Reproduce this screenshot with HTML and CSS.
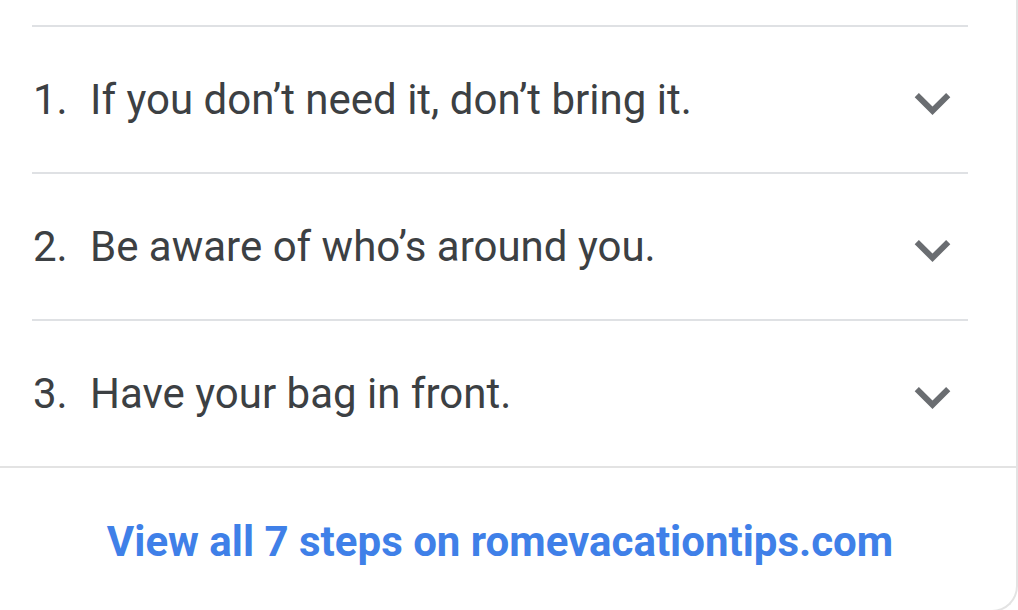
FILE: index.html
```html
<!DOCTYPE html>
<html>
<head>
<meta charset="utf-8">
<link rel="stylesheet" href="styles.css">
</head>
<body>
<div class="card">
  <div class="steps">
    <div class="step">
      <span class="num">1.</span>
      <span class="text">If you don’t need it, don’t bring it.</span>
      <svg class="chev" viewBox="6 8.59 12 7.41"><path d="M16.59 8.59L12 13.17 7.41 8.59 6 10l6 6 6-6z"/></svg>
    </div>
    <div class="step">
      <span class="num">2.</span>
      <span class="text">Be aware of who’s around you.</span>
      <svg class="chev" viewBox="6 8.59 12 7.41"><path d="M16.59 8.59L12 13.17 7.41 8.59 6 10l6 6 6-6z"/></svg>
    </div>
    <div class="step">
      <span class="num">3.</span>
      <span class="text">Have your bag in front.</span>
      <svg class="chev" viewBox="6 8.59 12 7.41"><path d="M16.59 8.59L12 13.17 7.41 8.59 6 10l6 6 6-6z"/></svg>
    </div>
  </div>
  <div class="footer">
    <a class="more">View all 7 steps on romevacationtips.com</a>
  </div>
</div>
</body>
</html>
```
FILE: styles.css
```css
html, body {
  margin: 0;
  padding: 0;
  background: #ffffff;
  overflow: hidden;
  height: 610px;
}
body {
  font-family: Roboto, "Liberation Sans", sans-serif;
}
.card {
  width: 1018px;
  height: 612px;
  box-sizing: border-box;
  border-right: 2px solid #e3e3e3;
  border-bottom: 2px solid #e3e3e3;
  border-bottom-right-radius: 26px;
  background: #fff;
  display: flex;
  flex-direction: column;
}
.steps {
  padding: 25px 48px 0 32px;
}
.step {
  height: 145px;
  border-top: 2px solid #dfe1e4;
  display: flex;
  align-items: center;
  color: #3c4043;
  font-size: 42px;
}
.num {
  width: 57px;
  padding-left: 1px;
  flex: none;
}
.text {
  flex: 1;
}
.chev {
  width: 37px;
  height: 22px;
  fill: #6a6d71;
  margin-right: 17px;
  margin-top: 8px;
  flex: none;
}
.footer {
  border-top: 2px solid #e3e3e3;
  flex: 1;
  display: flex;
  justify-content: center;
  padding-top: 49px;
  padding-right: 16px;
  box-sizing: border-box;
}
.more {
  color: #3f80e8;
  font-weight: 700;
  font-size: 42px;
  line-height: 50px;
  height: 50px;
}
```
